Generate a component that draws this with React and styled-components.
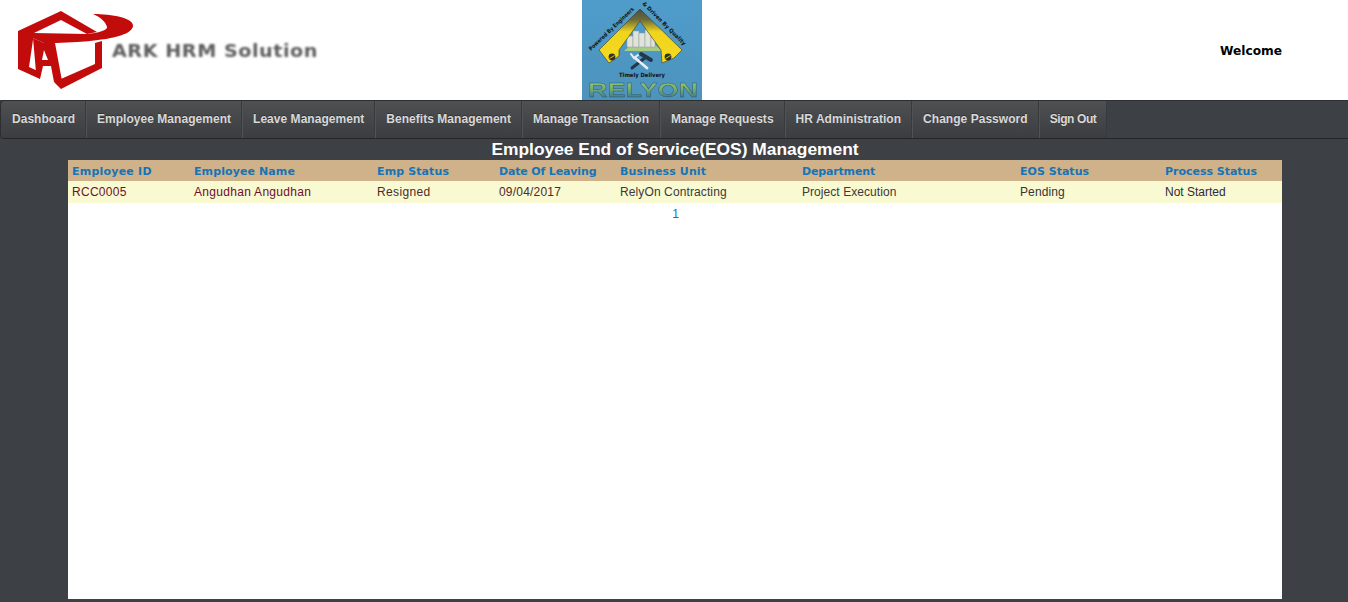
import React from 'react';
import styled, { createGlobalStyle } from 'styled-components';

const GlobalStyle = createGlobalStyle`
  html, body {
    margin: 0;
    padding: 0;
    height: 100%;
    background: #3d4145;
    font-family: "Liberation Sans", Arial, sans-serif;
  }
`;

const Page = styled.div`
  width: 1348px;
  height: 602px;
  overflow: hidden;
  background: #3d4145;
`;

const Header = styled.header`
  display: grid;
  grid-template-columns: 582px 120px 1fr;
  height: 100px;
  background: #fff;
`;

const LogoBox = styled.div`
  position: relative;
  height: 100px;
`;

const LogoText = styled.span`
  position: absolute;
  left: 112px;
  top: 41px;
  font-family: "DejaVu Sans", Verdana, sans-serif;
  font-size: 18px;
  line-height: 20px;
  font-weight: 700;
  letter-spacing: 0.5px;
  white-space: nowrap;
  color: #5e5e5e;
  filter: blur(0.9px);
  transform: scaleX(1.065);
  transform-origin: left center;
`;

const Welcome = styled.div`
  display: flex;
  align-items: center;
  justify-content: flex-end;
  padding: 2px 66px 0 0;
  font-family: "DejaVu Sans", Verdana, sans-serif;
  font-size: 12.2px;
  font-weight: 700;
  color: #000;
`;

const Nav = styled.nav`
  display: flex;
  height: 37px;
  border-top: 1px solid #2c2f32;
  border-bottom: 1px solid #24272a;
  border-left: 1px solid #2c2f32;
  border-radius: 4px 0 0 4px;
`;

const NavItem = styled.a`
  display: flex;
  align-items: center;
  padding: 0 10px 1px 11px;
  font-size: 12px;
  font-weight: 700;
  letter-spacing: 0.035px;
  color: #d8d8d8;
  text-shadow: 0 -1px 0 rgba(0, 0, 0, 0.35);
  background: linear-gradient(#4e5052, #3b3e41);
  border-right: 1px solid #383b3d;
  box-shadow: inset 1px 0 0 #505356;
  &:first-child {
    border-radius: 4px 0 0 4px;
    box-shadow: none;
  }
  &:last-child {
    letter-spacing: -0.4px;
  }
`;

const Title = styled.h1`
  margin: 0;
  height: 21px;
  padding-left: 2px;
  font-size: 17.4px;
  line-height: 20px;
  font-weight: 700;
  text-align: center;
  color: #fff;
`;

const Panel = styled.main`
  width: 1214px;
  height: 439px;
  margin-left: 68px;
  background: #fff;
`;

const Table = styled.div`
  display: grid;
  grid-template-columns: 122px 183px 122px 121px 182px 218px 145px 121px;
`;

const Row = styled.div`
  display: contents;
`;

const HeadCell = styled.div`
  height: 21px;
  padding-left: 4px;
  background: #cfb28a;
  font-family: "DejaVu Sans", Verdana, sans-serif;
  font-size: 11px;
  line-height: 23px;
  font-weight: 700;
  letter-spacing: ${p => p.$track}px;
  color: #1574b8;
  white-space: nowrap;
`;

const Cell = styled.div`
  height: 22px;
  padding-left: 4px;
  background: #f9f9d2;
  font-size: 12px;
  line-height: 22px;
  letter-spacing: ${p => p.$track}px;
  color: ${p => p.$color};
  white-space: nowrap;
`;

const Pager = styled.div`
  height: 22px;
  text-align: center;
  padding-left: 1px;
  font-size: 12px;
  line-height: 22px;
  color: #1574b8;
`;

const heads = [
  { text: 'Employee ID', track: 0.22 },
  { text: 'Employee Name', track: 0.1 },
  { text: 'Emp Status', track: 0.12 },
  { text: 'Date Of Leaving', track: -0.15 },
  { text: 'Business Unit', track: 0.12 },
  { text: 'Department', track: -0.16 },
  { text: 'EOS Status', track: 0.02 },
  { text: 'Process Status', track: -0.02 },
];
const cells = [
  { text: 'RCC0005', color: '#6e0f2a', track: 0.28 },
  { text: 'Angudhan Angudhan', color: '#6e0f2a', track: 0.3 },
  { text: 'Resigned', color: '#4e2a28', track: 0.35 },
  { text: '09/04/2017', color: '#4e2a28', track: 0.2 },
  { text: 'RelyOn Contracting', color: '#3a3a3a', track: 0.11 },
  { text: 'Project Execution', color: '#3a3a3a', track: 0.06 },
  { text: 'Pending', color: '#353535', track: 0.1 },
  { text: 'Not Started', color: '#2f2a40', track: 0 },
];
const menu = ['Dashboard', 'Employee Management', 'Leave Management', 'Benefits Management', 'Manage Transaction', 'Manage Requests', 'HR Administration', 'Change Password', 'Sign Out'];

const ArkMark = () => (
  <svg width="140" height="100" viewBox="0 0 140 100" style={{ filter: 'blur(0.4px)' }}>
    <g fill="#c20b0b">
      {/* roof and left wall */}
      <path d="M18 31 L61 11 L97 32 L87 34 L61 20 L34 33 L29 67 L40 72 L40 79 L18 69 Z" />
      {/* swoosh */}
      <path d="M33 33 L87 34 C98 33 108 30 107 27 C106 22 100 17 93 14 C112 14 134 18 133 26 C132 34 115 38 98 40 C85 42 70 42 56 43 L44 43 L33 38 Z" />
      {/* letter A */}
      <path fillRule="evenodd" d="M33 38 L44 43 L55 43 L62 81 L54 82 L51 66 L43 66 L40 79 L36 72 Z M44 50 L42 60 L48 60 Z" />
      {/* bottom and right wall */}
      <path d="M54 82 L95 64 L95 43 L102 41 L102 68 L61 89 Z" />
    </g>
  </svg>
);

const RelyOnLogo = () => (
  <svg width="120" height="100" viewBox="0 0 120 100">
    <defs>
      <linearGradient id="sky" x1="0" y1="0" x2="0" y2="1">
        <stop offset="0" stopColor="#4f9ccb" />
        <stop offset="1" stopColor="#4d93bd" />
      </linearGradient>
      <linearGradient id="arm" gradientUnits="userSpaceOnUse" x1="0" y1="9" x2="0" y2="63">
        <stop offset="0" stopColor="#4c4b45" />
        <stop offset="0.2" stopColor="#6d6b38" />
        <stop offset="0.42" stopColor="#f0d41c" />
        <stop offset="1" stopColor="#f4da20" />
      </linearGradient>
      <linearGradient id="word" x1="0" y1="0" x2="0" y2="1">
        <stop offset="0" stopColor="#a4d46c" />
        <stop offset="0.5" stopColor="#7aae6a" />
        <stop offset="1" stopColor="#2a6a9a" />
      </linearGradient>
      <path id="arcLeft" d="M9 51 L53 9" />
      <path id="arcRight" d="M60 4 L103 47" />
    </defs>
    <rect width="120" height="100" fill="url(#sky)" />
    <path d="M42 51 L50 44 L72 44 L80 51 Z" fill="#a9cc84" />
    <g fill="#dfe3da" stroke="#8d9a98" strokeWidth="0.5">
      <rect x="45" y="36" width="6" height="11" />
      <rect x="51" y="31" width="6" height="16" />
      <rect x="57" y="33" width="6" height="14" />
      <rect x="63" y="30" width="6" height="17" />
      <rect x="69" y="37" width="4" height="10" />
    </g>
    <path d="M58 9 L100 50 L92 58 L80 63 L79 50 L58 21 L37 50 L37 56 L27 63 L17 50 Z" fill="url(#arm)" stroke="#3b3b20" strokeWidth="0.6" />
    <circle cx="30" cy="57" r="3.4" fill="#33331f" />
    <path d="M27.5 58.5 L32.5 55.5" stroke="#d8c01e" strokeWidth="1" />
    <circle cx="86" cy="57" r="3.4" fill="#33331f" />
    <path d="M83.5 58.5 L88.5 55.5" stroke="#d8c01e" strokeWidth="1" />
    {/* crossed tools */}
    <g strokeLinecap="round">
      <path d="M50 68 L64 57" stroke="#23374a" strokeWidth="3" />
      <path d="M59 54 L69 60" stroke="#23374a" strokeWidth="3.8" />
      <path d="M65 68 L53 58" stroke="#e8eff3" strokeWidth="2.8" />
      <path d="M49 54 L52 58 L56 55" stroke="#e8eff3" strokeWidth="2" fill="none" />
    </g>
    <text fontFamily="DejaVu Sans" fontWeight="700" fontSize="5.5" fill="#111">
      <textPath href="#arcLeft" textLength="60" lengthAdjust="spacingAndGlyphs">Powered By Engineers</textPath>
    </text>
    <text fontFamily="DejaVu Sans" fontWeight="700" fontSize="5.5" fill="#111">
      <textPath href="#arcRight" textLength="59" lengthAdjust="spacingAndGlyphs">&amp;  Driven By Quality</textPath>
    </text>
    <text x="60" y="77" textAnchor="middle" fontFamily="DejaVu Sans" fontWeight="700" fontSize="5.8" textLength="46" lengthAdjust="spacingAndGlyphs" fill="#111">Timely Delivery</text>
    <text x="61" y="96.5" textAnchor="middle" fontFamily="Liberation Sans" fontWeight="700" fontSize="20.5" textLength="110" lengthAdjust="spacingAndGlyphs" fill="url(#word)" stroke="#2c5c70" strokeWidth="0.4" style={{ filter: 'blur(0.3px)' }}>RELYON</text>
  </svg>
);

export default function App() {
  return (
    <Page>
      <GlobalStyle />
      <Header>
        <LogoBox>
          <ArkMark />
          <LogoText>ARK HRM Solution</LogoText>
        </LogoBox>
        <RelyOnLogo />
        <Welcome>Welcome</Welcome>
      </Header>
      <Nav>
        {menu.map(m => <NavItem key={m}>{m}</NavItem>)}
      </Nav>
      <Title>Employee End of Service(EOS) Management</Title>
      <Panel>
        <Table>
          <Row>{heads.map(h => <HeadCell key={h.text} $track={h.track}>{h.text}</HeadCell>)}</Row>
          <Row>{cells.map(c => <Cell key={c.text} $color={c.color} $track={c.track}>{c.text}</Cell>)}</Row>
        </Table>
        <Pager>1</Pager>
      </Panel>
    </Page>
  );
}
